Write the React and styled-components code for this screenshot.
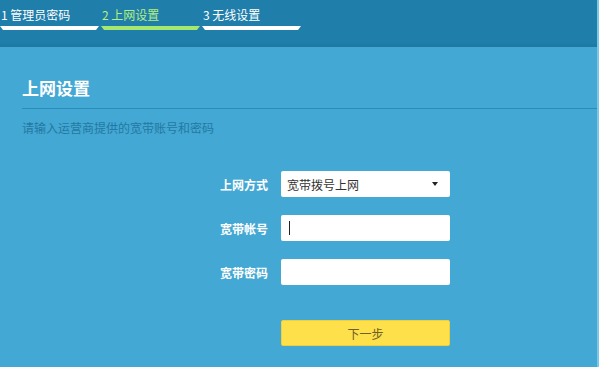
import React from 'react';
import styled, { createGlobalStyle } from 'styled-components';

const GlobalStyle = createGlobalStyle`
  html, body {
    margin: 0;
    padding: 0;
    background: #43a8d3;
  }
  body {
    font-family: "Noto Sans CJK SC", "Noto Sans", sans-serif;
  }
`;

const Page = styled.div`
  width: 599px;
  height: 367px;
  overflow: hidden;
  background: #43a8d3;
  border-right: 2px solid #7cc6e6;
  box-sizing: border-box;
`;

const Header = styled.div`
  height: 44px;
  background: #1f7eaa;
  border-bottom: 3px solid #1e79a3;
  display: flex;
`;

const Step = styled.div`
  width: 101px;
  display: flex;
  flex-direction: column;
`;

const StepLabel = styled.div`
  font-size: 12px;
  line-height: 14px;
  padding: 8px 0 0 ${(p) => p.$indent}px;
  color: ${(p) => (p.$active ? '#b4ef80' : '#ffffff')};
  white-space: nowrap;
`;

const StepBar = styled.div`
  margin-top: 4px;
  height: 4px;
  width: 99px;
  background: ${(p) => (p.$active ? '#a5e870' : '#ffffff')};
  clip-path: polygon(0 0, 100% 0, calc(100% - 3px) 100%, 3px 100%);
`;

const Main = styled.div`
  padding: 30px 0 0 22px;
`;

const Title = styled.h2`
  margin: 0;
  font-size: 17px;
  line-height: 22px;
  font-weight: 700;
  color: #ffffff;
`;

const Divider = styled.div`
  margin-top: 9px;
  height: 1px;
  background: #2a8cbb;
`;

const Hint = styled.p`
  margin: 11px 0 0;
  font-size: 12px;
  line-height: 16px;
  color: #2378a3;
`;

const Form = styled.div`
  margin: 35px 0 0 178px;
  display: grid;
  grid-template-columns: 68px 169px;
  column-gap: 13px;
  row-gap: 18px;
  align-items: center;
`;

const Label = styled.label`
  text-align: right;
  font-size: 12px;
  font-weight: 700;
  color: #ffffff;
`;

const Field = styled.div`
  position: relative;
  height: 26px;
  background: #ffffff;
  border-radius: 2px;
  box-sizing: border-box;
  display: flex;
  align-items: center;
  padding-left: 6px;
  font-size: 12px;
  color: #333333;
`;

const Caret = styled.span`
  width: 1px;
  height: 14px;
  background: #222222;
  margin-left: 2px;
`;

const Arrow = styled.span`
  position: absolute;
  right: 12px;
  top: 11px;
  width: 0;
  height: 0;
  border-left: 3px solid transparent;
  border-right: 3px solid transparent;
  border-top: 4px solid #222222;
`;

const Button = styled.button`
  grid-column: 2;
  margin-top: 17px;
  height: 26px;
  border: 1px solid #f0cf3a;
  border-radius: 2px;
  background: #fde04a;
  color: #6d6128;
  font-family: inherit;
  font-size: 12px;
  padding: 0;
`;

const steps = [
  { label: '1 管理员密码', indent: 1 },
  { label: '2 上网设置', indent: 1, active: true },
  { label: '3 无线设置', indent: 1 },
];

export default function App() {
  return (
    <Page>
      <GlobalStyle />
      <Header>
        {steps.map((s) => (
          <Step key={s.label}>
            <StepLabel $active={s.active} $indent={s.indent}>{s.label}</StepLabel>
            <StepBar $active={s.active} />
          </Step>
        ))}
      </Header>
      <Main>
        <Title>上网设置</Title>
        <Divider />
        <Hint>请输入运营商提供的宽带账号和密码</Hint>
        <Form>
          <Label>上网方式</Label>
          <Field>
            宽带拨号上网
            <Arrow />
          </Field>
          <Label>宽带帐号</Label>
          <Field>
            <Caret />
          </Field>
          <Label>宽带密码</Label>
          <Field />
          <Button>下一步</Button>
        </Form>
      </Main>
    </Page>
  );
}
